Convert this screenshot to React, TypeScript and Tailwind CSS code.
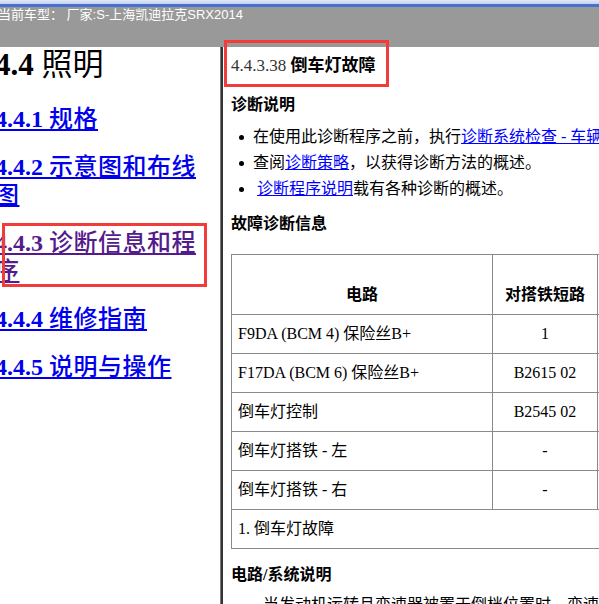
import React from 'react';

const serif = { fontFamily: '"Liberation Serif", "Noto Sans CJK SC", serif' };

const navLinks = [
  { num: '4.4.1', text: '规格', visited: false },
  { num: '4.4.2', text: '示意图和布线图', visited: false },
  { num: '4.4.3', text: '诊断信息和程序', visited: true },
  { num: '4.4.4', text: '维修指南', visited: false },
  { num: '4.4.5', text: '说明与操作', visited: false },
];

const rows = [
  { circuit: 'F9DA (BCM 4) 保险丝B+', ground: '1' },
  { circuit: 'F17DA (BCM 6) 保险丝B+', ground: 'B2615 02' },
  { circuit: '倒车灯控制', ground: 'B2545 02' },
  { circuit: '倒车灯搭铁 - 左', ground: '-' },
  { circuit: '倒车灯搭铁 - 右', ground: '-' },
];

function Bullet({ children }: { children: React.ReactNode }) {
  return (
    <li className="flex items-center whitespace-nowrap leading-[26px]">
      <span className="w-[22px] shrink-0 flex">
        <span className="ml-[8px] w-[5px] h-[5px] rounded-full bg-black" />
      </span>
      <span>{children}</span>
    </li>
  );
}

export default function App() {
  return (
    <div className="relative w-[599px] h-[604px] overflow-hidden bg-white" style={serif}>
      {/* window top edge */}
      <div className="h-[4px] bg-gradient-to-b from-[#e2e8f8] to-[#c3d0ef]" />
      <div className="h-[3px] bg-[#4671cc]" />

      {/* current vehicle bar */}
      <div
        className="h-[40px] bg-[#999999] text-white text-[13px] leading-[16px] whitespace-nowrap -ml-[2px]"
        style={{ fontFamily: '"Liberation Sans", "Noto Sans CJK SC", sans-serif' }}
      >
        当前车型： 厂家:S-上海凯迪拉克SRX2014
      </div>

      <div className="flex h-[557px]">
        {/* left tree */}
        <div className="w-[220px] shrink-0 overflow-hidden">
          <div className="-ml-[5px] w-[222px]">
            <h1 className="text-[31px] leading-[36px] text-black whitespace-nowrap">
              <span className="font-bold">4.4</span> <span>照明</span>
            </h1>
            <div className="mt-[22px] flex flex-col gap-[20px]">
              {navLinks.map(l => (
                <a
                  key={l.num}
                  href="#"
                  className={`text-[24px] leading-[28px] underline underline-offset-2 ${
                    l.visited ? 'text-[#551a8b] decoration-[#551a8b]' : 'text-[#0000ee] decoration-[#0000ee]'
                  }`}
                >
                  <span className="font-bold">{l.num}</span>{' '}
                  <span className="font-medium tracking-[0.5px]">{l.text}</span>
                </a>
              ))}
            </div>
          </div>
        </div>

        {/* splitter */}
        <div className="w-[3px] shrink-0 border-l border-[#7a7a7a] bg-[#333333]" />

        {/* document */}
        <div className="flex-1 overflow-hidden pl-[8px] pt-[7px] text-[16px] text-black">
          <div className="text-[17px] leading-[24px] whitespace-nowrap">
            <span className="text-[#333333]">4.4.3.38</span> <span className="font-bold">倒车灯故障</span>
          </div>

          <div className="mt-[17px] font-bold leading-[20px]">诊断说明</div>
          <ul className="mt-[9px]">
            <Bullet>
              在使用此诊断程序之前，执行
              <a href="#" className="text-[#0000ff] underline">诊断系统检查 - 车辆</a>
            </Bullet>
            <Bullet>
              查阅<a href="#" className="text-[#0000ff] underline">诊断策略</a>，以获得诊断方法的概述。
            </Bullet>
            <Bullet>
              <a href="#" className="ml-[4px] text-[#0000ff] underline">诊断程序说明</a>载有各种诊断的概述。
            </Bullet>
          </ul>

          <div className="mt-[12px] font-bold leading-[20px]">故障诊断信息</div>

          <table className="mt-[20px] w-[620px] table-fixed border-collapse border border-[#8a8a8a] leading-[20px]">
            <colgroup>
              <col className="w-[261px]" />
              <col className="w-[105px]" />
              <col className="w-[127px]" />
              <col className="w-[127px]" />
            </colgroup>
            <thead>
              <tr className="h-[60px]">
                <th className="border border-[#8a8a8a] align-bottom pb-[9px] font-bold">电路</th>
                <th className="border border-[#8a8a8a] align-bottom pb-[9px] font-bold">对搭铁短路</th>
                <th className="border border-[#8a8a8a] align-bottom pb-[9px] font-bold">开路/电阻过大</th>
                <th className="border border-[#8a8a8a] align-bottom pb-[9px] font-bold">对电压短路</th>
              </tr>
            </thead>
            <tbody>
              {rows.map(r => (
                <tr key={r.circuit} className="h-[39px]">
                  <td className="border border-[#8a8a8a] px-[6px] whitespace-nowrap">{r.circuit}</td>
                  <td className="border border-[#8a8a8a] text-center">{r.ground}</td>
                  <td className="border border-[#8a8a8a] text-center">-</td>
                  <td className="border border-[#8a8a8a] text-center">-</td>
                </tr>
              ))}
              <tr className="h-[39px]">
                <td colSpan={4} className="border border-[#8a8a8a] px-[6px]">1. 倒车灯故障</td>
              </tr>
            </tbody>
          </table>

          <div className="mt-[16px] font-bold leading-[20px]">电路/系统说明</div>
          <p className="mt-[8px] leading-[24px] indent-[2em] whitespace-nowrap">
            当发动机运转且变速器被置于倒档位置时，变速器档位开关向车身控制模块发送信号。
          </p>
        </div>
      </div>

      {/* annotation boxes */}
      <div className="absolute left-[224px] top-[40px] w-[165px] h-[47px] border-[3px] border-[#f23b3b]" />
      <div className="absolute left-[2px] top-[223px] w-[205px] h-[64px] border-[3px] border-[#f23b3b]" />
    </div>
  );
}
